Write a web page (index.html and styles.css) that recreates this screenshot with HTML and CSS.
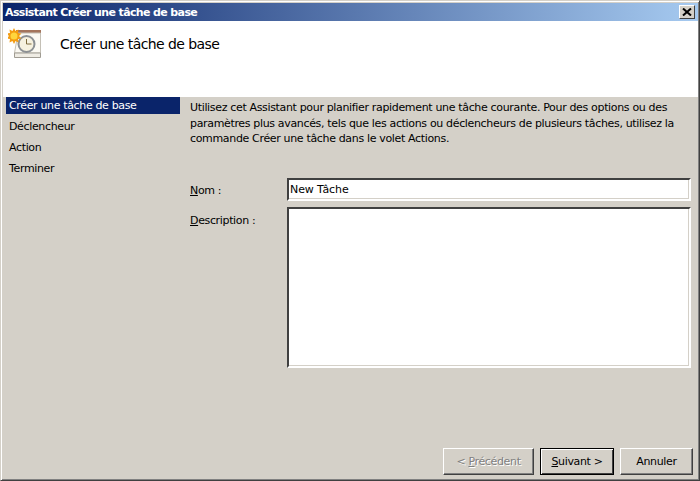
FILE: index.html
```html
<!DOCTYPE html>
<html lang="fr">
<head>
<meta charset="utf-8">
<title>Assistant Créer une tâche de base</title>
<link rel="stylesheet" href="styles.css">
</head>
<body>
<div class="window">
  <div class="titlebar">
    <span class="title">Assistant Créer une tâche de base</span>
    <button class="close" type="button" aria-label="Fermer">
      <svg width="10" height="8" viewBox="0 0 10 8"><path d="M1 0.500 L9 7.500 M9 0.500 L1 7.500" fill="none" stroke="#000" stroke-width="2"/></svg>
    </button>
  </div>
  <header class="banner">
    <svg class="logo" width="34" height="33" viewBox="0 0 34 33">
      <rect x="8" y="3" width="25" height="3" fill="#a4745c"/>
      <path d="M10 6h22.500v20H6.500z" fill="#fbf9f3" stroke="#c4c0b6"/>
      <path d="M6.500 26h26v4.500h-26z" fill="#efece4" stroke="#a09c93"/>
      <circle cx="18.500" cy="17" r="8" fill="#f6f1df" stroke="#8c9094" stroke-width="2"/>
      <path d="M18.500 12v5h5" fill="none" stroke="#7d6a3c"/>
      <path d="M6 1l1.500 3 3-1.500-.5 3.500 3.500.500-2.500 2.500 2.500 2.500-3.500.500.5 3.500-3-1.500-1.500 3-1.500-3-3 1.500.5-3.500-3.500-.500 2.500-2.500-2.500-2.500 3.500-.500-.5-3.500 3 1.500z" fill="#f39c12"/>
      <circle cx="6" cy="9" r="3.500" fill="#ffd53d"/>
    </svg>
    <h1 class="heading">Créer une tâche de base</h1>
  </header>
  <div class="main">
    <nav class="steps">
      <div class="step active">Créer une tâche de base</div>
      <div class="step">Déclencheur</div>
      <div class="step">Action</div>
      <div class="step">Terminer</div>
    </nav>
    <section class="panel">
      <p class="intro">Utilisez cet Assistant pour planifier rapidement une tâche courante. Pour des options ou des paramètres plus avancés, tels que les actions ou déclencheurs de plusieurs tâches, utilisez la commande Créer une tâche dans le volet Actions.</p>
      <div class="row">
        <label class="label" for="nom"><u>N</u>om :</label>
        <input class="field" id="nom" type="text" value="New Tâche">
      </div>
      <div class="row desc">
        <label class="label" for="description"><u>D</u>escription :</label>
        <textarea class="field area" id="description"></textarea>
      </div>
    </section>
  </div>
  <footer class="buttons">
    <button class="btn disabled" type="button" disabled>&lt; <u>P</u>récédent</button>
    <button class="btn default" type="button"><u>S</u>uivant &gt;</button>
    <button class="btn cancel" type="button">Annuler</button>
  </footer>
</div>
</body>
</html>
```
FILE: styles.css
```css
* { box-sizing: border-box; }
html, body { margin: 0; height: 100%; }
body { font-family: "DejaVu Sans", sans-serif; font-size: 11px; color: #000; background: #d4d0c8; overflow: hidden; }
.window {
  width: 700px; height: 481px; display: flex; flex-direction: column;
  background: #d4d0c8; padding: 2px 1px 1px 2px;
  border-top: 1px solid #d4d0c8; border-left: 1px solid #d4d0c8;
  border-right: 1px solid #404040; border-bottom: 1px solid #404040;
  box-shadow: inset 1px 1px 0 #fff, inset -1px -1px 0 #808080;
}
.titlebar {
  height: 18px; flex: none; display: flex; align-items: center; justify-content: space-between;
  padding: 0 3px 0 2px; background: linear-gradient(90deg, #0a246a, #a6caf0);
  color: #fff; font-weight: bold;
}
.title { letter-spacing: -0.63px; }
.close {
  width: 16px; height: 14px; padding: 0; display: flex; align-items: center; justify-content: center;
  background: #d4d0c8; border: 1px solid; border-color: #fff #404040 #404040 #fff;
}
.banner { height: 76px; flex: none; background: #fff; display: flex; align-items: flex-start; padding: 6px 0 0 5px; }
.logo { flex: none; }
.heading { margin: 9px 0 0 18px; font-weight: normal; font-size: 14px; letter-spacing: -0.57px; }
.main { flex: 1; display: flex; min-height: 0; }
.steps { width: 177px; flex: none; padding: 0 0 0 3px; }
.step { height: 21px; padding: 1px 0 0 3px; letter-spacing: -0.35px; line-height: 15px; }
.step.active { height: 17px; margin-bottom: 4px; background: #0a246a; color: #fff; }
.panel { flex: 1; padding: 0 7px 0 10px; }
.intro { margin: 3px 0 31px; line-height: 15.5px; height: 47px; letter-spacing: -0.34px; }
.row { display: flex; align-items: flex-start; }
.row.desc { margin-top: 6px; }
.label { width: 97px; flex: none; padding-top: 6px; letter-spacing: -0.35px; }
.desc .label { padding-top: 7px; }
.field {
  flex: 1; height: 23px; font: inherit; padding: 2px 1px; letter-spacing: -0.1px; background: #fff; outline: none; resize: none; display: block;
  border: 2px solid; border-color: #404040 #fff #fff #404040; box-shadow: inset -1px -1px 0 #d4d0c8;
}
.area { height: 161px; }
.buttons { flex: none; height: 32px; display: flex; justify-content: flex-end; gap: 6px; padding: 0 5px 4px 0; align-items: flex-end; }
.btn {
  width: 73px; height: 27px; font: inherit; letter-spacing: -0.35px; background: #d4d0c8; padding: 0; color: #000;
  border: 1px solid; border-color: #fff #404040 #404040 #fff; box-shadow: inset -1px -1px 0 #808080;
}
.btn.disabled { width: 91px; color: #808080; text-shadow: 1px 1px 0 #fff; }
.btn.default { width: 74px; border: 1px solid #000; box-shadow: inset 1px 1px 0 #fff, inset -1px -1px 0 #404040; }
```
